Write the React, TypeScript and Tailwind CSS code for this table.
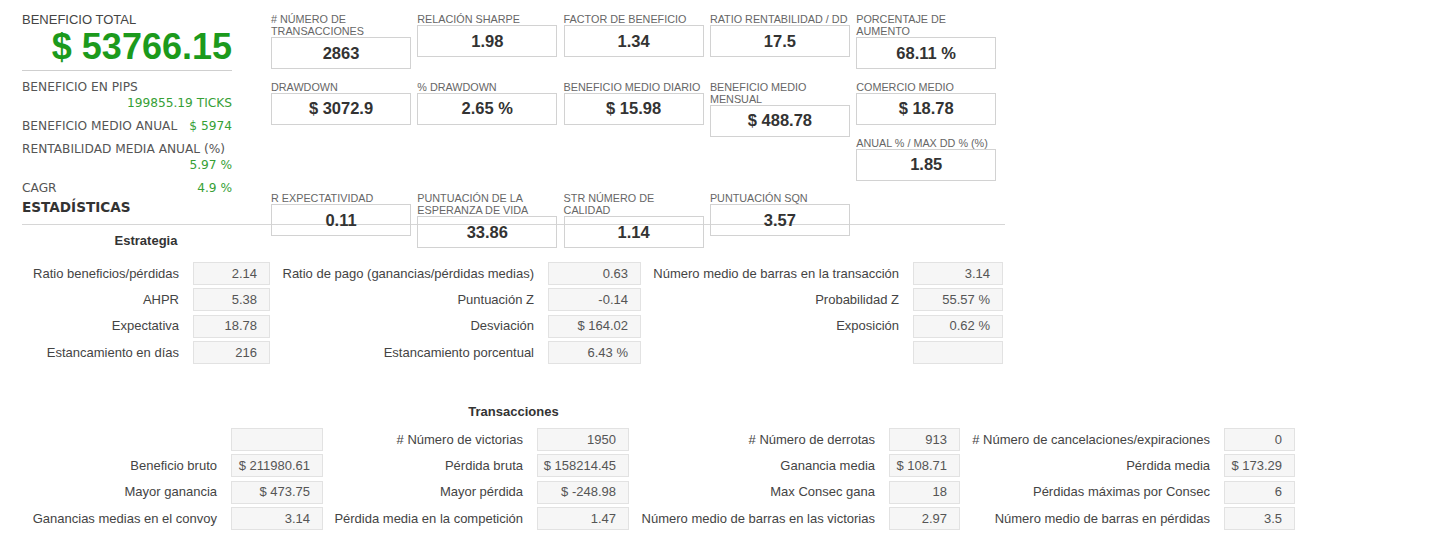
import React from "react";

type Card = { label: string; value: string };

const row1: Card[] = [
  { label: "# NÚMERO DE TRANSACCIONES", value: "2863" },
  { label: "RELACIÓN SHARPE", value: "1.98" },
  { label: "FACTOR DE BENEFICIO", value: "1.34" },
  { label: "RATIO RENTABILIDAD / DD", value: "17.5" },
  { label: "PORCENTAJE DE AUMENTO", value: "68.11 %" },
];

const row2: Card[] = [
  { label: "DRAWDOWN", value: "$ 3072.9" },
  { label: "% DRAWDOWN", value: "2.65 %" },
  { label: "BENEFICIO MEDIO DIARIO", value: "$ 15.98" },
  { label: "BENEFICIO MEDIO MENSUAL", value: "$ 488.78" },
];

const row3: Card[] = [
  { label: "R EXPECTATIVIDAD", value: "0.11" },
  { label: "PUNTUACIÓN DE LA ESPERANZA DE VIDA", value: "33.86" },
  { label: "STR NÚMERO DE CALIDAD", value: "1.14" },
  { label: "PUNTUACIÓN SQN", value: "3.57" },
];

const strategy: [string, string][][] = [
  [
    ["Ratio beneficios/pérdidas", "2.14"],
    ["Ratio de pago (ganancias/pérdidas medias)", "0.63"],
    ["Número medio de barras en la transacción", "3.14"],
  ],
  [
    ["AHPR", "5.38"],
    ["Puntuación Z", "-0.14"],
    ["Probabilidad Z", "55.57 %"],
  ],
  [
    ["Expectativa", "18.78"],
    ["Desviación", "$ 164.02"],
    ["Exposición", "0.62 %"],
  ],
  [
    ["Estancamiento en días", "216"],
    ["Estancamiento porcentual", "6.43 %"],
    ["", ""],
  ],
];

const trades: [string, string][][] = [
  [
    ["", ""],
    ["# Número de victorias", "1950"],
    ["# Número de derrotas", "913"],
    ["# Número de cancelaciones/expiraciones", "0"],
  ],
  [
    ["Beneficio bruto", "$ 211980.61"],
    ["Pérdida bruta", "$ 158214.45"],
    ["Ganancia media", "$ 108.71"],
    ["Pérdida media", "$ 173.29"],
  ],
  [
    ["Mayor ganancia", "$ 473.75"],
    ["Mayor pérdida", "$ -248.98"],
    ["Max Consec gana", "18"],
    ["Pérdidas máximas por Consec", "6"],
  ],
  [
    ["Ganancias medias en el convoy", "3.14"],
    ["Pérdida media en la competición", "1.47"],
    ["Número medio de barras en las victorias", "2.97"],
    ["Número medio de barras en pérdidas", "3.5"],
  ],
];

const StatCard = ({ label, value }: Card) => (
  <div>
    <div className="w-[138px] text-[10.8px] leading-[12px] text-[#666] uppercase">{label}</div>
    <div className="h-[32px] border border-[#d2d2d2] flex items-center justify-center text-[16.5px] font-bold text-[#333]">
      {value}
    </div>
  </div>
);

const ValueBox = ({ value }: { value: string }) => (
  <div className="h-[23px] bg-[#f6f6f6] border border-[#e2e2e2] flex items-center justify-end pr-[12px] text-[#555]">
    {value}
  </div>
);

const Label = ({ text }: { text: string }) => (
  <div className="h-[23px] flex items-center justify-end pr-[14px] text-[#444] whitespace-nowrap">{text}</div>
);

const LeftRow = ({ label, value }: { label: string; value: string }) => (
  <div className="flex justify-between leading-[16px]">
    <span>{label}</span>
    <span className="text-[#36a036]">{value}</span>
  </div>
);

export default function App() {
  return (
    <div className="w-[1432px] h-[551px] bg-white overflow-hidden font-['Liberation_Sans',Arial,sans-serif] text-[13px]">
      <div className="pl-[22px] pt-[13px]">
        {/* Summary + metric cards */}
        <div className="flex items-start h-[203px]">
          <div className="w-[210px] shrink-0">
            <div className="text-[13px] leading-[14px] text-[#444]">BENEFICIO TOTAL</div>
            <div className="mt-[2px] text-right text-[36px] leading-[36px] font-bold text-[#1c9a1c]">$ 53766.15</div>
            <div className="mt-[5px] border-t border-[#cfcfcf]"></div>
            <div className="font-['DejaVu_Sans',Verdana,sans-serif] text-[12.2px] text-[#555]">
              <div className="mt-[8px] leading-[16px]">BENEFICIO EN PIPS</div>
              <div className="text-right leading-[16px] text-[#36a036]">199855.19 TICKS</div>
              <div className="mt-[7px]">
                <LeftRow label="BENEFICIO MEDIO ANUAL" value="$ 5974" />
              </div>
              <div className="mt-[7px] leading-[16px] whitespace-nowrap">RENTABILIDAD MEDIA ANUAL (%)</div>
              <div className="text-right leading-[16px] text-[#36a036]">5.97 %</div>
              <div className="mt-[7px]">
                <LeftRow label="CAGR" value="4.9 %" />
              </div>
            </div>
            <div className="mt-[2px] font-['DejaVu_Sans',Verdana,sans-serif] font-bold text-[13.6px] leading-[18px] text-[#333]">
              ESTADÍSTICAS
            </div>
          </div>

          <div className="ml-[39px] grid grid-cols-[repeat(5,140px)] gap-x-[6.3px] gap-y-[11.5px] items-start">
            {row1.map((c) => (
              <StatCard key={c.label} {...c} />
            ))}
            {row2.map((c) => (
              <StatCard key={c.label} {...c} />
            ))}
            <div className="flex flex-col gap-[12px]">
              <StatCard label="COMERCIO MEDIO" value="$ 18.78" />
              <StatCard label="ANUAL % / MAX DD % (%)" value="1.85" />
            </div>
            {row3.map((c) => (
              <StatCard key={c.label} {...c} />
            ))}
          </div>
        </div>

        <div className="mt-[8px] w-[983px] border-t border-[#d6d6d6]"></div>

        {/* Estrategia */}
        <div className="mt-[8px] w-[248px] text-center font-bold leading-[16px] text-[#333]">Estrategia</div>
        <div className="mt-[13px] grid grid-cols-[171px_77px_278px_93px_272px_90px] gap-y-[3.33px]">
          {strategy.map((row, i) => (
            <React.Fragment key={i}>
              {row.map(([l, v], j) => (
                <React.Fragment key={j}>
                  <Label text={l} />
                  <ValueBox value={v} />
                </React.Fragment>
              ))}
            </React.Fragment>
          ))}
        </div>

        {/* Transacciones */}
        <div className="mt-[40px] w-[983px] text-center font-bold leading-[16px] text-[#333]">Transacciones</div>
        <div className="mt-[8px] grid grid-cols-[209px_92px_214px_92px_260px_71px_264px_71px] gap-y-[3.33px]">
          {trades.map((row, i) => (
            <React.Fragment key={i}>
              {row.map(([l, v], j) => (
                <React.Fragment key={j}>
                  <Label text={l} />
                  <ValueBox value={v} />
                </React.Fragment>
              ))}
            </React.Fragment>
          ))}
        </div>
      </div>
    </div>
  );
}
